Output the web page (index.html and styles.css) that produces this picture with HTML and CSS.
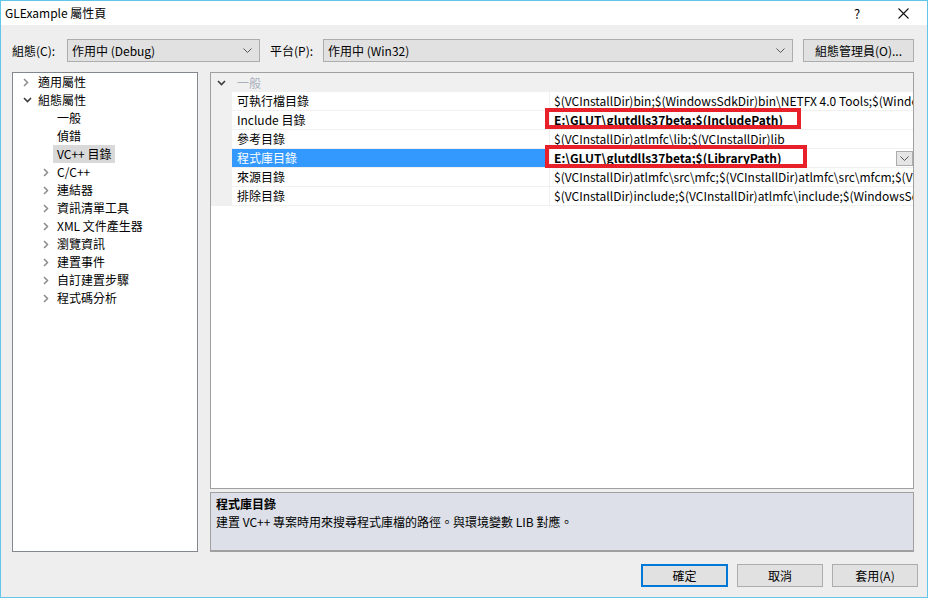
FILE: index.html
```html
<!DOCTYPE html>
<html lang="zh-Hant">
<head>
<meta charset="utf-8">
<title>GLExample 屬性頁</title>
<link rel="stylesheet" href="styles.css">
</head>
<body>
<div class="window">
  <div class="titlebar">
    <span class="title">GLExample 屬性頁</span>
    <span class="cap-help">?</span>
    <span class="cap-close"><svg width="11" height="11" viewBox="0 0 11 11"><path d="M0.5 0.5 L10.5 10.5 M10.5 0.5 L0.5 10.5" stroke="#111" stroke-width="1.1" fill="none"/></svg></span>
  </div>
  <div class="content">
    <div class="toolbar">
      <span class="lbl lbl-config">組態(C):</span>
      <div class="combo combo-config"><span class="combo-text">作用中 (Debug)</span><svg class="combo-arrow" width="9" height="5" viewBox="0 0 9 5"><path d="M0.5 0.5 L4.5 4.5 L8.5 0.5" stroke="#555" stroke-width="1" fill="none"/></svg></div>
      <span class="lbl lbl-plat">平台(P):</span>
      <div class="combo combo-plat"><span class="combo-text">作用中 (Win32)</span><svg class="combo-arrow" width="9" height="5" viewBox="0 0 9 5"><path d="M0.5 0.5 L4.5 4.5 L8.5 0.5" stroke="#555" stroke-width="1" fill="none"/></svg></div>
      <div class="btn btn-mgr">組態管理員(O)...</div>
    </div>
    <div class="main">
      <div class="tree">
        <div class="node l1"><span class="tw"><svg width="6" height="9" viewBox="0 0 6 9"><path d="M1 1 L4.5 4.5 L1 8" stroke="#8c8c8c" stroke-width="1.5" fill="none"/></svg></span><span class="nl">適用屬性</span></div>
        <div class="node l1"><span class="tw"><svg width="9" height="6" viewBox="0 0 9 6"><path d="M1 1 L4.5 4.5 L8 1" stroke="#3c3c3c" stroke-width="1.6" fill="none"/></svg></span><span class="nl">組態屬性</span></div>
        <div class="node l2"><span class="tw"></span><span class="nl">一般</span></div>
        <div class="node l2"><span class="tw"></span><span class="nl">偵錯</span></div>
        <div class="node l2"><span class="tw"></span><span class="nl sel">VC++ 目錄</span></div>
        <div class="node l2"><span class="tw"><svg width="6" height="9" viewBox="0 0 6 9"><path d="M1 1 L4.5 4.5 L1 8" stroke="#8c8c8c" stroke-width="1.5" fill="none"/></svg></span><span class="nl">C/C++</span></div>
        <div class="node l2"><span class="tw"><svg width="6" height="9" viewBox="0 0 6 9"><path d="M1 1 L4.5 4.5 L1 8" stroke="#8c8c8c" stroke-width="1.5" fill="none"/></svg></span><span class="nl">連結器</span></div>
        <div class="node l2"><span class="tw"><svg width="6" height="9" viewBox="0 0 6 9"><path d="M1 1 L4.5 4.5 L1 8" stroke="#8c8c8c" stroke-width="1.5" fill="none"/></svg></span><span class="nl">資訊清單工具</span></div>
        <div class="node l2"><span class="tw"><svg width="6" height="9" viewBox="0 0 6 9"><path d="M1 1 L4.5 4.5 L1 8" stroke="#8c8c8c" stroke-width="1.5" fill="none"/></svg></span><span class="nl">XML 文件產生器</span></div>
        <div class="node l2"><span class="tw"><svg width="6" height="9" viewBox="0 0 6 9"><path d="M1 1 L4.5 4.5 L1 8" stroke="#8c8c8c" stroke-width="1.5" fill="none"/></svg></span><span class="nl">瀏覽資訊</span></div>
        <div class="node l2"><span class="tw"><svg width="6" height="9" viewBox="0 0 6 9"><path d="M1 1 L4.5 4.5 L1 8" stroke="#8c8c8c" stroke-width="1.5" fill="none"/></svg></span><span class="nl">建置事件</span></div>
        <div class="node l2"><span class="tw"><svg width="6" height="9" viewBox="0 0 6 9"><path d="M1 1 L4.5 4.5 L1 8" stroke="#8c8c8c" stroke-width="1.5" fill="none"/></svg></span><span class="nl">自訂建置步驟</span></div>
        <div class="node l2"><span class="tw"><svg width="6" height="9" viewBox="0 0 6 9"><path d="M1 1 L4.5 4.5 L1 8" stroke="#8c8c8c" stroke-width="1.5" fill="none"/></svg></span><span class="nl">程式碼分析</span></div>
      </div>
      <div class="right">
        <div class="grid">
          <div class="cat"><span class="cat-tw"><svg width="9" height="6" viewBox="0 0 9 6"><path d="M1 1 L4.5 4.5 L8 1" stroke="#3c3c3c" stroke-width="1.6" fill="none"/></svg></span><span class="cat-name">一般</span></div>
          <div class="prow"><span class="gut"></span><span class="pname">可執行檔目錄</span><span class="pval"><span class="ptext">$(VCInstallDir)bin;$(WindowsSdkDir)bin\NETFX 4.0 Tools;$(WindowsSdkDir)bin;$(VSInstallDir)Common7\Tools\bin</span></span></div>
          <div class="prow"><span class="gut"></span><span class="pname">Include 目錄</span><span class="pval"><span class="ptext bold">E:\GLUT\glutdlls37beta;$(IncludePath)</span><span class="mark mark1"></span></span></div>
          <div class="prow"><span class="gut"></span><span class="pname">參考目錄</span><span class="pval"><span class="ptext">$(VCInstallDir)atlmfc\lib;$(VCInstallDir)lib</span></span></div>
          <div class="prow selrow"><span class="gut"></span><span class="pname">程式庫目錄</span><span class="pval"><span class="ptext bold">E:\GLUT\glutdlls37beta;$(LibraryPath)</span><span class="mark mark2"></span><span class="ddbtn"><svg width="9" height="5" viewBox="0 0 9 5"><path d="M0.5 0.5 L4.5 4.5 L8.5 0.5" stroke="#555" stroke-width="1" fill="none"/></svg></span></span></div>
          <div class="prow"><span class="gut"></span><span class="pname">來源目錄</span><span class="pval"><span class="ptext">$(VCInstallDir)atlmfc\src\mfc;$(VCInstallDir)atlmfc\src\mfcm;$(VCInstallDir)atlmfc\src\atl</span></span></div>
          <div class="prow"><span class="gut"></span><span class="pname">排除目錄</span><span class="pval"><span class="ptext">$(VCInstallDir)include;$(VCInstallDir)atlmfc\include;$(WindowsSdkDir)include</span></span></div>
        </div>
        <div class="desc">
          <div class="desc-title">程式庫目錄</div>
          <div class="desc-text">建置 VC++ 專案時用來搜尋程式庫檔的路徑。與環境變數 LIB 對應。</div>
        </div>
      </div>
    </div>
    <div class="footer">
      <div class="btn btn-ok">確定</div>
      <div class="btn">取消</div>
      <div class="btn">套用(A)</div>
    </div>
  </div>
</div>
</body>
</html>
```
FILE: styles.css
```css
* { box-sizing: border-box; }
html, body { margin: 0; padding: 0; }
body {
  width: 928px;
  height: 598px;
  overflow: hidden;
  font-family: "Noto Sans CJK TC", "Noto Sans", sans-serif;
  font-size: 12px;
  color: #000;
  background: #fff;
}
.window {
  width: 928px;
  height: 598px;
  border: 1px solid #62c6ea;
  display: flex;
  flex-direction: column;
  background: #eeeeee;
  overflow: hidden;
}
.titlebar {
  height: 24px;
  background: #fff;
  display: flex;
  align-items: center;
  padding-left: 4px;
  flex: none;
}
.title { flex: 1; line-height: 16px; }
.cap-help { width: 30px; text-align: center; margin-right: 16px; font-size: 13px; }
.cap-close { width: 30px; display: flex; justify-content: center; margin-right: 9px; }

.content {
  flex: 1;
  min-height: 0;
  display: flex;
  flex-direction: column;
  padding: 14px 13px 0 11px;
}
.toolbar {
  height: 23px;
  display: flex;
  align-items: center;
  flex: none;
}
.lbl { line-height: 23px; flex: none; }
.lbl-config { width: 55px; }
.lbl-plat { width: 53px; margin-left: 10px; }
.combo {
  flex: none;
  height: 23px;
  background: #e1e1e1;
  border: 1px solid #adadad;
  display: flex;
  align-items: center;
  padding: 0 7px 0 4px;
}
.combo-text { flex: 1; line-height: 21px; }
.combo-config { width: 193px; }
.combo-plat { width: 470px; }
.btn {
  flex: none;
  height: 23px;
  background: #e1e1e1;
  border: 1px solid #adadad;
  display: flex;
  align-items: center;
  justify-content: center;
  line-height: 21px;
}
.btn-mgr { width: 111px; margin-left: 10px; }

.main {
  margin-top: 10px;
  height: 480px;
  display: flex;
  flex: none;
  min-width: 0;
}
.tree {
  width: 186px;
  flex: none;
  background: #fff;
  border: 1px solid #828790;
}
.node {
  height: 18px;
  display: flex;
  align-items: center;
}
.node.l1 { padding-left: 9px; }
.node.l2 { padding-left: 28px; }
.tw {
  width: 16px;
  height: 18px;
  flex: none;
  display: flex;
  align-items: center;
  padding-left: 1px;
}
.node.l2 .tw { padding-left: 2px; }
.nl { line-height: 18px; white-space: nowrap; }
.nl.sel { background: #d9d9d9; margin-left: -4px; padding: 0 4px; }

.right {
  margin-left: 12px;
  flex: 1;
  min-width: 0;
  display: flex;
  flex-direction: column;
  gap: 3px;
}
.grid {
  flex: 1;
  min-width: 0;
  background: #fff;
  border: 1px solid #a0a0a0;
  overflow: hidden;
}
.cat {
  height: 19px;
  background: #f0f0f0;
  display: flex;
  align-items: center;
}
.cat-tw { width: 26px; display: flex; align-items: center; padding-left: 6px; }
.cat-name { color: #aab1bd; line-height: 18px; }
.prow {
  height: 19px;
  display: flex;
  border-bottom: 1px solid #f0f0f0;
}
.gut { width: 21px; flex: none; background: #f0f0f0; }
.pname {
  width: 318px;
  flex: none;
  padding-left: 5px;
  border-right: 1px solid #f0f0f0;
  line-height: 18px;
  white-space: nowrap;
}
.pval {
  flex: 1;
  min-width: 0;
  padding-left: 4px;
  position: relative;
}
.ptext {
  display: block;
  line-height: 18px;
  white-space: nowrap;
  overflow: hidden;
}
.ptext.bold { font-weight: 600; }
.selrow .pname { background: #3399ff; color: #fff; }
.mark {
  position: absolute;
  border: 4px solid #e8202a;
  left: -5px;
}
.mark1 { top: -3px; width: 256px; height: 21px; }
.mark2 { top: -4px; width: 262px; height: 23px; }
.ddbtn {
  position: absolute;
  right: 0;
  top: 2px;
  width: 17px;
  height: 15px;
  background: #e5e5e5;
  border: 1px solid #acacac;
  display: flex;
  align-items: center;
  justify-content: center;
}
.desc {
  height: 60px;
  flex: none;
  background: #dde0e8;
  border: 1px solid #a0a0a0;
  border-bottom: 2px solid #a0a0a0;
  padding: 2px 5px 0;
  line-height: 18px;
}
.desc-title { font-weight: bold; }

.footer {
  margin-top: 12px;
  display: flex;
  justify-content: flex-end;
  gap: 9px;
  margin-right: -4px;
}
.footer .btn { width: 86px; }
.footer .btn-ok { width: 87px; border: 2px solid #0078d7; }
```
